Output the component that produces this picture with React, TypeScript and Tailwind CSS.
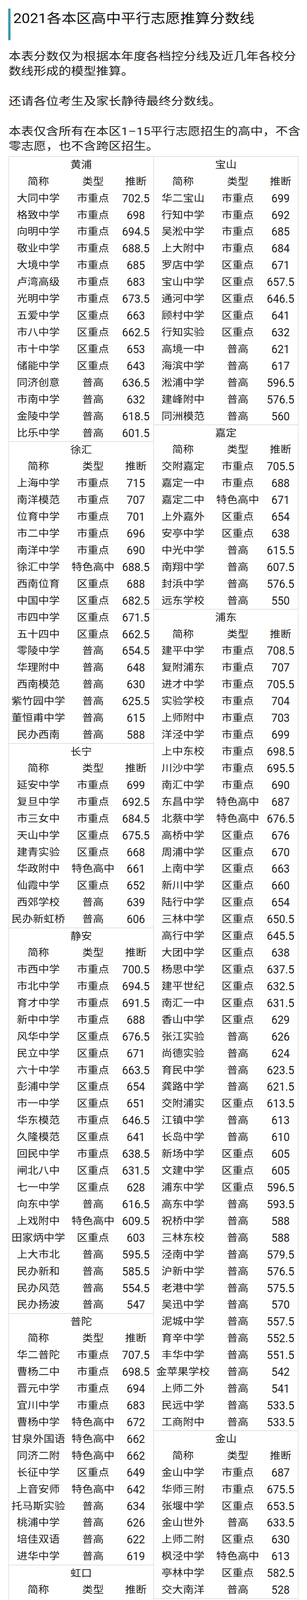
import React from "react";

const T: Record<string, string> = { 市: "市重点", 区: "区重点", 普: "普高", 特: "特色高中" };

function parse(s: string): [string, string, string][] {
  return s
    .trim()
    .split(/\s*\n\s*/)
    .map((l) => {
      const [a, b, c] = l.split(/\s+/);
      return [a, T[b], c] as [string, string, string];
    });
}

type Sec = { name: string; rows: [string, string, string][] };

const LEFT: Sec[] = [
  {
    name: "黄浦",
    rows: parse(`
大同中学 市 702.5
格致中学 市 698
向明中学 市 694.5
敬业中学 市 688.5
大境中学 市 685
卢湾高级 市 683
光明中学 市 673.5
五爱中学 区 663
市八中学 区 662.5
市十中学 区 653
储能中学 区 643
同济创意 普 636.5
市南中学 普 632
金陵中学 普 618.5
比乐中学 普 601.5`),
  },
  {
    name: "徐汇",
    rows: parse(`
上海中学 市 715
南洋模范 市 707
位育中学 市 701
市二中学 市 696
南洋中学 市 690
徐汇中学 特 688.5
西南位育 区 688
中国中学 区 682.5
市四中学 区 671.5
五十四中 区 662.5
零陵中学 普 654.5
华理附中 普 648
西南模范 普 630
紫竹园中学 普 625.5
董恒甫中学 普 615
民办西南 普 588`),
  },
  {
    name: "长宁",
    rows: parse(`
延安中学 市 699
复旦中学 市 692.5
市三女中 市 684.5
天山中学 区 675.5
建青实验 区 668
华政附中 特 661
仙霞中学 区 652
西郊学校 普 639
民办新虹桥 普 606`),
  },
  {
    name: "静安",
    rows: parse(`
市西中学 市 700.5
市北中学 市 694.5
育才中学 市 691.5
新中中学 市 688
风华中学 区 676.5
民立中学 区 671
六十中学 市 663.5
彭浦中学 区 654
市一中学 区 651
华东模范 市 646.5
久隆模范 区 641
回民中学 市 638.5
闸北八中 区 631.5
七一中学 区 628
向东中学 普 616.5
上戏附中 特 609.5
田家炳中学 区 603
上大市北 普 595.5
民办新和 普 585.5
民办风范 普 554.5
民办扬波 普 547`),
  },
  {
    name: "普陀",
    rows: parse(`
华二普陀 市 707.5
曹杨二中 市 698.5
晋元中学 市 694
宜川中学 市 683
曹杨中学 特 672
甘泉外国语 特 662
同济二附 特 662
长征中学 区 649
上音安师 特 642
托马斯实验 普 634
桃浦中学 普 626
培佳双语 普 622
进华中学 普 619`),
  },
  {
    name: "虹口",
    rows: parse(`
复兴中学 市 700.5
华师一附 市 693
北郊中学 市 687
虹口高级 区 674.5
北虹中学 区 661.5
鲁迅中学 区 652
上外一实 普 640.5
澄衷中学 区 633
继光中学 区 610.5
五十二中 普 569.5`),
  },
  {
    name: "杨浦",
    rows: parse(`
复旦附中 市 716.5
控江中学 市 703.5
杨浦高级 市 695
同济一附 市 687.5
上理附中 特 677
市东中学 区 668
上财附中 区 656
复旦实验 区 650.5
同济中学 区 640.5
中原中学 区 627.5
少云中学 区 612.5
民星中学 区 584.5
体院附中 区 578.5
民办剑桥 普 558`),
  },
  {
    name: "闵行",
    rows: parse(`
七宝中学 市 707
市二梅陇 市 699.5
向明浦江 市 699.5
上师闵行 市 698.5
闵行中学 市 695
上外闵外 区 690.5
莘庄中学 区 682.5
七宝鑫都 普 676.5
闵行三中 普 670
华理科高 区 662
文来中学 区 661.5
田园中学 区 656.5
文绮中学 普 644
古美中学 普 638.5
浦江中学 普 629.5
金汇中学 普 619
闵教附中 普 605.5
教科实验 普 569
燎原双语 普 563
诺德安达 普 548`),
  },
];

const RIGHT: Sec[] = [
  {
    name: "宝山",
    rows: parse(`
华二宝山 市 699
行知中学 市 692
吴淞中学 市 685
上大附中 市 684
罗店中学 区 671
宝山中学 区 657.5
通河中学 区 646.5
顾村中学 区 641
行知实验 区 632
高境一中 普 621
海滨中学 普 617
淞浦中学 普 596.5
建峰附中 普 576.5
同洲模范 普 560`),
  },
  {
    name: "嘉定",
    rows: parse(`
交附嘉定 市 705.5
嘉定一中 市 688
嘉定二中 特 671
上外嘉外 区 654
安亭中学 区 638
中光中学 普 615.5
南翔中学 普 607.5
封浜中学 普 576.5
远东学校 普 550`),
  },
  {
    name: "浦东",
    rows: parse(`
建平中学 市 708.5
复附浦东 市 707
进才中学 市 705.5
实验学校 市 704
上师附中 市 703
洋泾中学 市 699
上中东校 市 698.5
川沙中学 市 695.5
南汇中学 市 690
东昌中学 特 687
北蔡中学 特 676.5
高桥中学 区 676
周浦中学 区 670
上南中学 区 663
新川中学 区 660
陆行中学 区 654
三林中学 区 650.5
高行中学 区 645.5
大团中学 区 638
杨思中学 区 637.5
建平世纪 区 632.5
南汇一中 区 631.5
香山中学 区 629
张江实验 普 626
尚德实验 普 624
育民中学 普 623.5
龚路中学 普 621.5
交附浦实 区 613.5
江镇中学 普 613
长岛中学 普 610
新场中学 区 605
文建中学 区 605
浦东中学 区 596.5
高东中学 普 593.5
祝桥中学 普 588
三林东校 普 588
泾南中学 普 579.5
沪新中学 普 576.5
老港中学 普 575.5
吴迅中学 普 570
泥城中学 普 557.5
育辛中学 普 552.5
丰华中学 普 551.5
金苹果学校 普 542
上师二外 普 541
民远中学 普 533.5
工商附中 普 533.5`),
  },
  {
    name: "金山",
    rows: parse(`
金山中学 市 687
华师三附 市 675.5
张堰中学 区 653.5
金山世外 普 633.5
上师二附 区 630
枫泾中学 特 613
亭林中学 区 582.5
交大南洋 普 528`),
  },
  {
    name: "松江",
    rows: parse(`
松江二中 市 699.5
松江一中 市 690
上师附外 区 671.5
华实高中 区 655
立达中学 普 636.5
松江四中 普 604.5
上外西外 普 542`),
  },
  {
    name: "青浦",
    rows: parse(`
青浦高级 市 688
朱家角中学 市 671
宋庆龄学校 普 655
青浦一中 区 653.5
东湖中学 普 634.5
青浦二中 普 607`),
  },
  {
    name: "奉贤",
    rows: parse(`
格致奉贤 市 696
奉贤中学 市 694
曙光中学 区 676.5
致远中学 区 655.5
奉城中学 普 634.5
景秀中学 普 613
上师四附 普 598
帕丁顿双语 普 550.5`),
  },
  {
    name: "崇明",
    rows: parse(`
崇明中学 市 675
民本中学 区 633
扬子中学 区 617.5
城桥中学 区 540
堡镇中学 区 540
横沙中学 普 540
民一中学 普 499.5`),
  },
];

function Row({ c, head }: { c: [string, string, string]; head?: boolean }) {
  return (
    <div className="grid h-[42.93px] grid-cols-[150px_130px_1fr] items-center text-center leading-[30px] whitespace-nowrap">
      <div className="scale-y-[0.9]">{c[0]}</div>
      <div className="scale-y-[0.9]">{c[1]}</div>
      {head ? (
        <div className="scale-y-[0.9]">{c[2]}</div>
      ) : (
        <div className="text-[28px] scale-y-[1.06]">{c[2]}</div>
      )}
    </div>
  );
}

function Section({ s }: { s: Sec }) {
  return (
    <div>
      <div className="flex h-[42.93px] items-center justify-center border-t border-[#c6c6c6] leading-[30px]">
        <span className="scale-y-[0.9]">{s.name}</span>
      </div>
      <Row c={["简称", "类型", "推断"]} head />
      {s.rows.map((r, i) => (
        <Row key={i} c={r} />
      ))}
    </div>
  );
}

export default function App() {
  return (
    <div className="w-[786px] bg-white pb-[16px] font-['Roboto','Noto_Sans_CJK_SC',sans-serif] text-[#1e1e1e]">
      <div className="pt-[22px]">
        <div className="ml-[21px] h-[81px] border-l-[6px] border-[#3a9bb0] pl-[7px]">
          <h1 className="scale-y-[0.9] text-[38px] leading-[50px] font-normal text-[#111]">2021各本区高中平行志愿推算分数线</h1>
        </div>
      </div>
      <div className="px-[22px]">
        <div className="mt-[22px] text-[32px] leading-[38.33px] whitespace-nowrap text-[#222]">
          <div className="scale-y-[0.88]">本表分数仅为根据本年度各档控分线及近几年各校分</div>
          <div className="scale-y-[0.88]">数线形成的模型推算。</div>
          <div className="h-[38.33px]"></div>
          <div className="scale-y-[0.88]">还请各位考生及家长静待最终分数线。</div>
          <div className="h-[38.33px]"></div>
          <div className="scale-y-[0.88]">本表仅含所有在本区1–15平行志愿招生的高中，不含</div>
          <div className="scale-y-[0.88]">零志愿，也不含跨区招生。</div>
        </div>
        <div className="mt-[7px] flex items-start text-[27.5px]">
          <div className="w-[376px] border-x border-b border-[#cfcfcf]">
            {LEFT.map((s) => (
              <Section key={s.name} s={s} />
            ))}
          </div>
          <div className="w-[375px] border-r border-b border-[#cfcfcf]">
            {RIGHT.map((s) => (
              <Section key={s.name} s={s} />
            ))}
          </div>
        </div>
      </div>
    </div>
  );
}
